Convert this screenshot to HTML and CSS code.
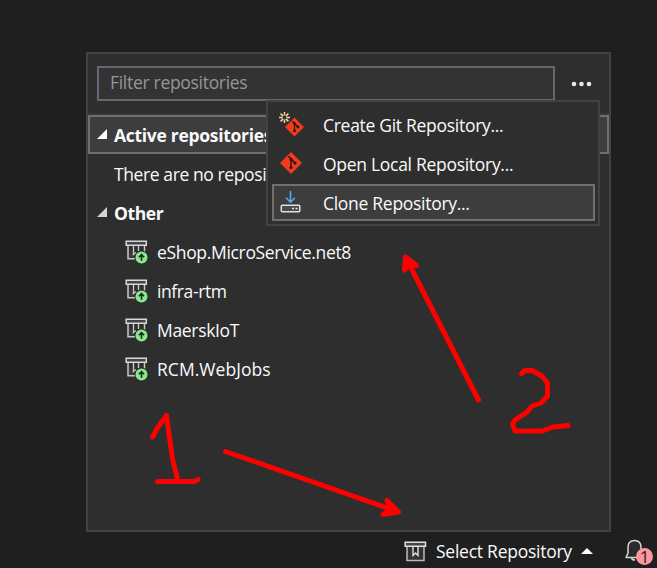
FILE: index.html
```html
<!DOCTYPE html>
<html lang="en">
<head>
<meta charset="utf-8">
<title>Select Repository</title>
<link rel="stylesheet" href="styles.css">
</head>
<body>
<svg class="defs" aria-hidden="true">
  <symbol id="repo" viewBox="0 0 24 24">
    <path d="M4 6V18.800H11M20.500 6V12" fill="#3b3b3b" stroke="#c8c8c8" stroke-width="1.500"/>
    <path d="M9.500 6V14.500L12 12.500M14.500 6V11" fill="none" stroke="#c8c8c8" stroke-width="1.400"/>
    <path d="M2.200 1.200H22.300V5.300H2.200Z" fill="#444" stroke="#d8d8d8" stroke-width="1.500"/>
    <circle cx="17.500" cy="17.500" r="6.900" fill="#2e2e2e"/>
    <circle cx="17.500" cy="17.500" r="6" fill="#89e78d"/>
    <path d="M17.500 20.800V14.800M14.900 17.200L17.500 14.600L20.100 17.200" fill="none" stroke="#152c16" stroke-width="1.600"/>
  </symbol>
  <symbol id="git" viewBox="0 0 22 22">
    <path d="M11 1L21 11L11 21L1 11Z" fill="#f03c1c" stroke="#f03c1c" stroke-width="1.4" stroke-linejoin="round"/>
    <path d="M8.3 4.2L11 7V15.5M11 7L15 11" fill="none" stroke="#24150f" stroke-width="1.4"/>
    <circle cx="11" cy="7" r="1.5" fill="#24150f"/><circle cx="11" cy="15.5" r="1.6" fill="#24150f"/><circle cx="15" cy="11" r="1.6" fill="#24150f"/>
  </symbol>
</svg>
<section class="panel">
  <div class="search">
    <div class="filter"><span class="t-filter">Filter repositories</span></div>
    <svg class="more" viewBox="0 0 22 6"><circle cx="3" cy="3" r="2.3"/><circle cx="10.5" cy="3" r="2.3"/><circle cx="18" cy="3" r="2.3"/></svg>
  </div>
  <div class="tree">
    <div class="row group active"><svg class="twist" viewBox="0 0 10 10"><path d="M10 0V10H0Z"/></svg><span>Active repositories</span></div>
    <div class="row empty"><span>There are no repositories</span></div>
    <div class="row group other"><svg class="twist" viewBox="0 0 10 10"><path d="M10 0V10H0Z"/></svg><span>Other</span></div>
    <div class="row repo"><svg><use href="#repo"/></svg><span class="t-shop">eShop.MicroService.net8</span></div>
    <div class="row repo"><svg><use href="#repo"/></svg><span class="t-infra">infra-rtm</span></div>
    <div class="row repo"><svg><use href="#repo"/></svg><span class="t-iot">MaerskIoT</span></div>
    <div class="row repo"><svg><use href="#repo"/></svg><span class="t-jobs">RCM.WebJobs</span></div>
  </div>
</section>
<div class="menu">
  <div class="item"><svg viewBox="0 0 28 28"><g stroke="#f0d798" stroke-width="1.5"><path d="M6.5 1V4.6M6.5 8.4V12M1 6.5H4.6M8.4 6.5H12M2.6 2.6L5.1 5.1M7.9 7.9L10.4 10.4M10.4 2.6L7.900 5.1M5.100 7.900L2.600 10.400"/></g><use href="#git" x="7" y="6.5" width="19" height="19"/></svg><span class="t-create">Create Git Repository...</span></div>
  <div class="item"><svg viewBox="0 0 28 28"><use href="#git" x="2" y="2" width="22" height="22"/></svg><span class="t-open">Open Local Repository...</span></div>
  <div class="item selected"><svg viewBox="0 0 28 28"><path d="M12.500 2V13M8 8.700L12.500 13.200L17 8.700" fill="none" stroke="#55aaff" stroke-width="1.600"/><rect x="3.300" y="16.200" width="18.500" height="6.500" rx="1" fill="#4a4a4a" stroke="#e0e0e0" stroke-width="1.500"/><path d="M14 19.500H16M17.500 19.500H19.500" stroke="#eee" stroke-width="1.600"/></svg><span class="t-clone">Clone Repository...</span></div>
</div>
<footer class="status">
  <svg class="box" viewBox="0 0 24 22"><path d="M3 6V19.5H20V6" fill="#333" stroke="#bcbcbc" stroke-width="1.5"/><path d="M9 6V14.5L11.500 12L14 14.500V6" fill="#292929" stroke="#dedede" stroke-width="1.400"/><path d="M1.200 1.200H21.500V5.300H1.200Z" fill="#444" stroke="#e1e1e1" stroke-width="1.500"/></svg>
  <span class="t-select">Select Repository</span>
  <svg class="up" viewBox="0 0 12 6"><path d="M0 6L6 0L12 6Z"/></svg>
  <div class="bell"><svg viewBox="0 0 22 22"><path d="M2 18.500L4 14V8.500C4 4 6.500 1.500 10.500 1.500C14.500 1.500 17 4 17 8.500V14L19 18.500Z" fill="#2b2b2b" stroke="#d6d6d6" stroke-width="1.500" stroke-linejoin="round"/><path d="M7.500 19Q8 21 11 21" fill="none" stroke="#d6d6d6" stroke-width="1.500"/></svg><b>1</b></div>
</footer>
<svg class="ink" viewBox="0 0 657 568">
  <path d="M152.500 437L157 428.500L166.500 415.500L170 441L172.500 459L177.500 479M157.500 481.500H195L198 479.500"/>
  <path d="M521.500 373.500L525 370.500H532L542 376L547.500 383V396L541 403L532 406L527 412L515 420L512.500 424L515 431H542L553 427L568 425.500"/>
  <g class="arrow"><path d="M225.500 451.500L396 511"/><path class="head" d="M387 500.500L398.500 512L383 514.500L391 509Z"/>
  <path d="M478.500 400L407 260"/><path class="head" d="M404.500 270L405.500 257L416.500 265.500L409 265.500Z"/></g>
</svg>
</body>
</html>
```

FILE: styles.css
```css
* { box-sizing: border-box; }
body { margin: 0; width: 657px; height: 568px; overflow: hidden; position: relative; display: flex; flex-direction: column; background: #1f1f1f; color: #fafafa; font: 17.5px/24px "Open Sans", "Noto Sans", sans-serif; letter-spacing: -.4px; white-space: nowrap; }
svg { display: block; flex: none; }
.defs { position: absolute; width: 0; height: 0; }
.panel { width: 525px; height: 480px; margin: 52px 0 0 86px; border: 2px solid #424242; background: #2e2e2e; flex: none; }
.search { height: 59px; padding: 12px 0 0 9px; display: flex; }
.filter { width: 458px; height: 35px; border: 2px solid #68676f; background: #333; color: #969696; padding: 2px 11px; letter-spacing: -.3px; }
.more { width: 22px; height: 6px; margin: 15px 0 0 16px; fill: #e8e8e8; }
.tree { border-top: 2px solid #383838; }
.row { height: 39px; display: flex; align-items: center; padding-top: 1px; }
.group { font-weight: 700; padding-left: 9px; }
.active { background: #3d3d3d; border: 2px solid #707070; padding-left: 7px; letter-spacing: -.3px; }
.twist { width: 10px; height: 10px; margin: -3px 7px 0 0; fill: #fff; }
.other .twist { fill: #d4d4d4; }
.empty { padding-left: 26px; }
.repo { padding-left: 36px; }
.repo svg { width: 24px; height: 24px; margin-right: 9px; }
.t-shop { letter-spacing: -.33px; }
.t-iot { letter-spacing: -.32px; }
.t-jobs { letter-spacing: .05px; }
.menu { position: absolute; left: 266px; top: 100px; width: 334px; height: 126px; border: 2px solid #424242; background: #2e2e2e; padding: 3px 4px; letter-spacing: -.29px; }
.item { height: 39px; display: flex; align-items: center; padding-left: 6px; }
.item svg { width: 28px; height: 28px; margin-right: 17px; }
.item.selected { margin-top: 1px; height: 37px; width: 323px; border: 2px solid #707070; background: #3d3d3d; padding-left: 4px; }
.status { height: 36px; display: flex; align-items: center; padding-left: 404px; padding-top: 3px; flex: none; }
.box { width: 24px; height: 22px; margin: 1px 8px 0 0; }
.t-select { width: 145px; margin-top: -1px; letter-spacing: -.25px; }
.up { width: 12px; height: 6px; margin-top: -2px; fill: #fff; }
.bell { position: relative; width: 30px; height: 28px; margin-left: 31px; }
.bell svg { width: 22px; height: 22px; margin-top: 1px; }
.bell b { position: absolute; left: 12px; top: 10px; width: 17px; height: 17px; border-radius: 50%; background: #ff959d; color: #1f1f1f; font: 17px/17px "Open Sans", sans-serif; text-align: center; }
.ink { position: absolute; left: 0; top: 0; width: 657px; height: 568px; fill: none; stroke: #f00; stroke-width: 5; stroke-linejoin: round; stroke-linecap: round; pointer-events: none; }
.head { fill: #f00; }
```
